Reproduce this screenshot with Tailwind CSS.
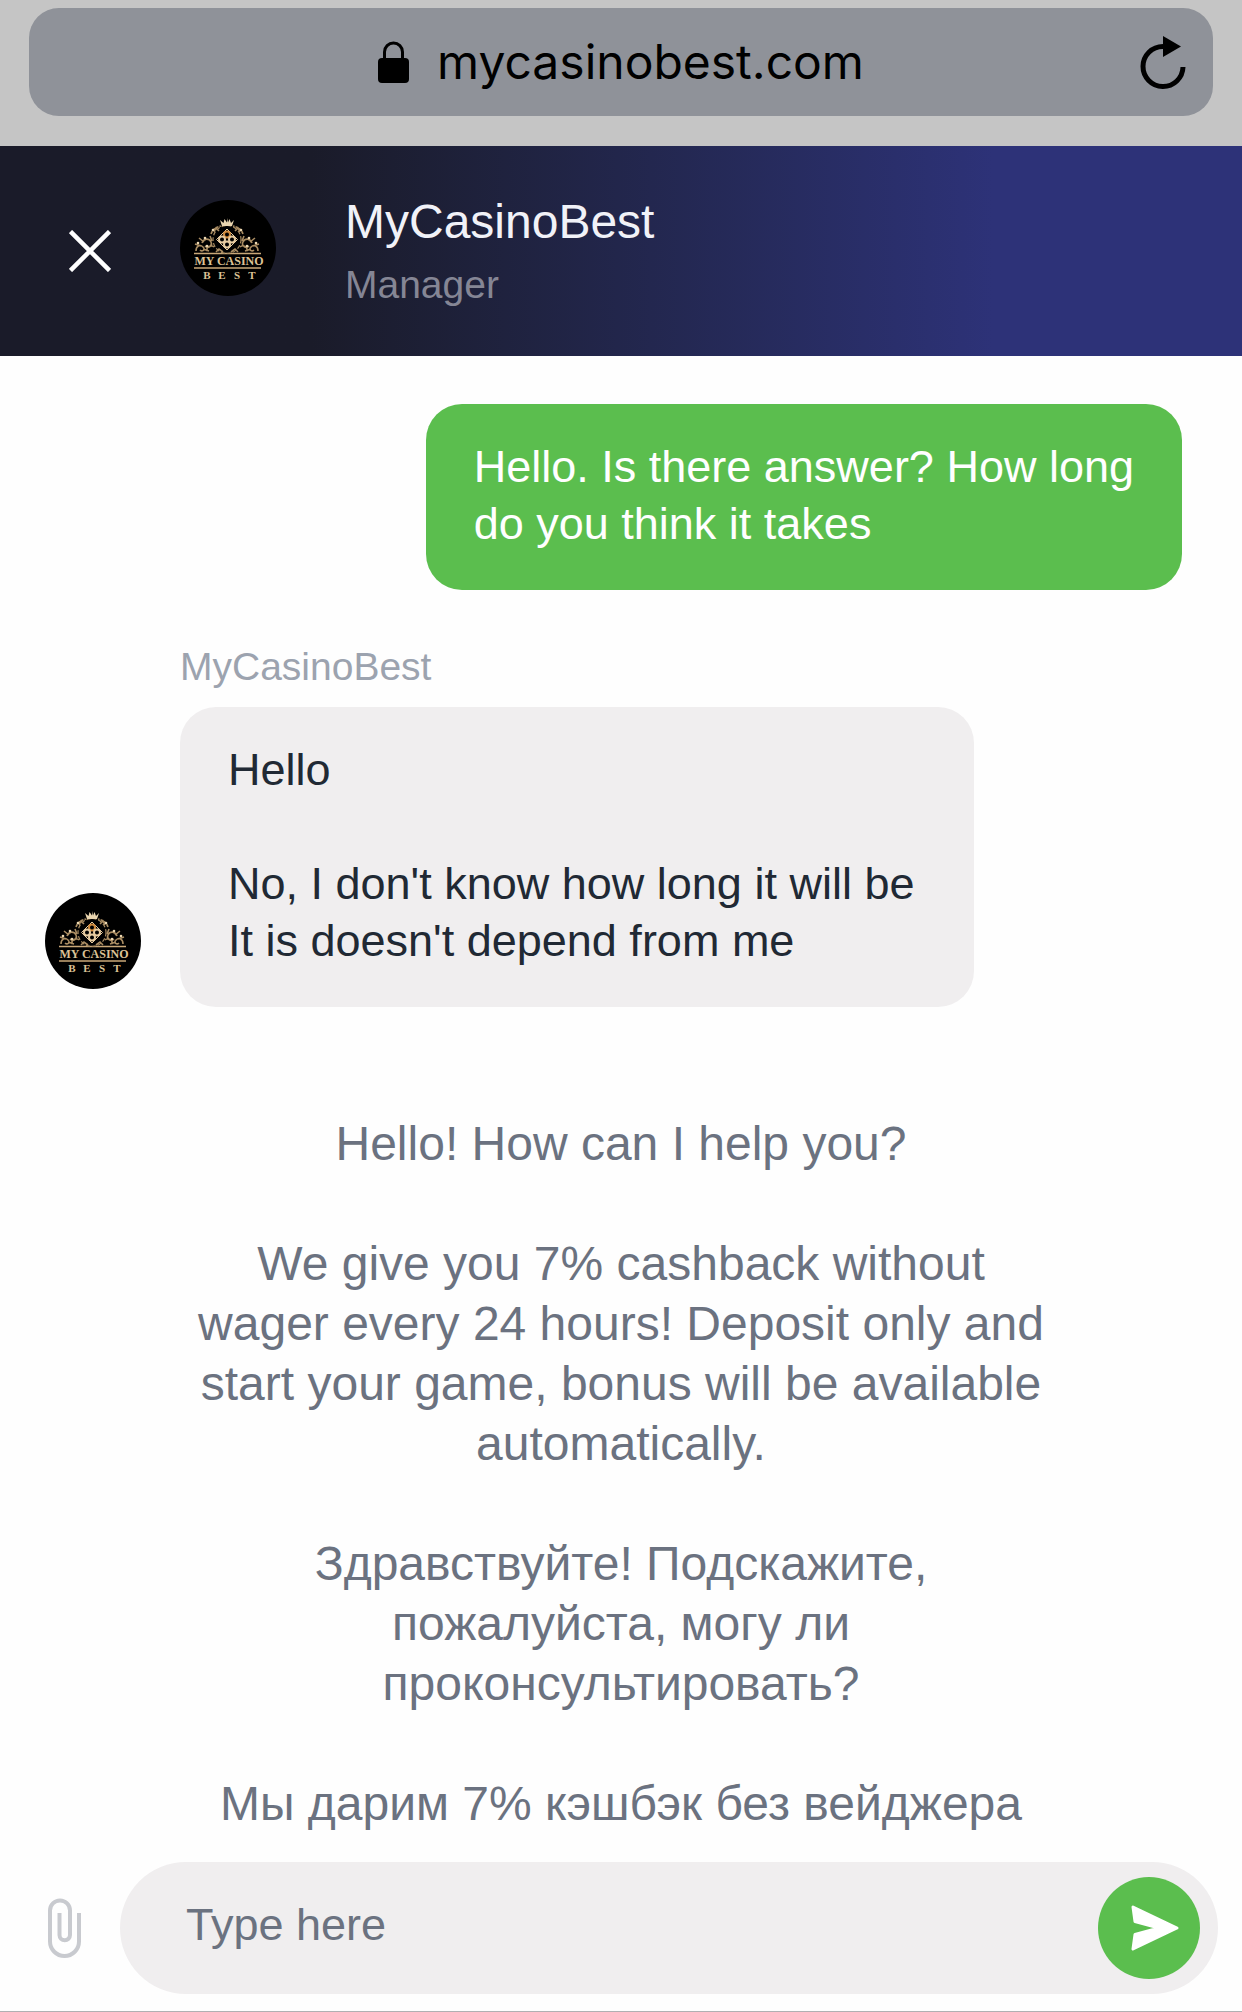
<!DOCTYPE html>
<html lang="en">
<head>
  <meta charset="UTF-8">
  <meta name="viewport" content="width=device-width, initial-scale=1.0">
  <title>MyCasinoBest - Live Chat</title>
  <script src="https://cdn.jsdelivr.net/npm/@tailwindcss/browser@4"></script>
</head>
<body class="bg-[#fefefe] font-['Liberation_Sans',Arial,sans-serif]">
  <!-- Logo shared by the header and the message avatar -->
  <svg class="hidden" aria-hidden="true">
    <symbol id="logo" viewBox="0 0 96 96">
      <circle cx="48" cy="48" r="48" fill="#000"/>
      <path d="M14 53.500h67M14 68h67" stroke="#c9a878" stroke-width="1.5"/>
      <!-- centre diamond -->
      <g fill="none" stroke="#e6cba0" stroke-width="2">
        <path d="M47 29l10.500 10.500L47 50 36.500 39.500z" stroke-width="1"/>
        <circle cx="47" cy="34.500" r="3" stroke="#d08a3c"/>
        <circle cx="47" cy="44.500" r="3"/>
        <circle cx="42" cy="39.500" r="3"/>
        <circle cx="52" cy="39.500" r="3"/>
      </g>
      <!-- scrollwork -->
      <g fill="none" stroke="#a98c62" stroke-width="1.6">
        <circle cx="47" cy="39.500" r="14" stroke-dasharray="4 2" stroke-width="1.2"/>
        <path d="M31 34c2-5 5-7 10-8M63 34c-2-5-5-7-10-8" stroke-dasharray="3 1"/>
        <path d="M34 32l2-4 3 3M60 32l-2-4-3 3M36 52l3-3 4 3M58 52l-3-3-4 3"/>
        <path d="M16 51c0-5 4-7 7-4s-1 5-3 3M22 43c2-5 7-5 9-1s-3 7-6 4M27 51c-1-4 4-7 7-4M15 44l6 2M19 38l5 4M30 36l2 5M23 49l6 2"/>
        <path d="M78 51c0-5-4-7-7-4s1 5 3 3M72 43c-2-5-7-5-9-1s3 7 6 4M67 51c1-4-4-7-7-4M79 44l-6 2M75 38l-5 4M64 36l-2 5M71 49l-6 2"/>
      </g>
      <g fill="#ead6b0">
        <circle cx="18" cy="43" r="1.300"/><circle cx="25" cy="38" r="1.300"/><circle cx="27" cy="46" r="1.300"/><circle cx="33" cy="30" r="1.300"/>
        <circle cx="76" cy="43" r="1.300"/><circle cx="69" cy="38" r="1.300"/><circle cx="67" cy="46" r="1.300"/><circle cx="61" cy="30" r="1.300"/>
        <path d="M42 26l-2-6 3.500 3 1-4 2.500 3.500L47 18l1 4.500 1.500-3.500 1.500 4 3-3-2 6z"/>
      </g>
      <g font-family="Liberation Serif, serif" font-weight="700" fill="#dcc296" text-anchor="middle">
        <text x="49" y="65" font-size="12">MY CASINO</text>
        <g font-size="11">
          <text x="27" y="79">B</text><text x="42" y="79">E</text><text x="57" y="79">S</text><text x="72" y="79">T</text>
        </g>
      </g>
    </symbol>
  </svg>

  <div class="flex h-screen flex-col overflow-hidden border-b border-[#b0b0b2]">
    <!-- Browser address bar -->
    <div class="shrink-0 bg-[#c5c5c5] px-[29px] pt-2 pb-[30px]">
      <div class="relative flex h-[108px] items-center justify-center rounded-[30px] bg-[#8f9299] text-black">
        <svg class="mr-7 h-[42px] w-[31px]" viewBox="0 0 31 42" aria-hidden="true">
          <rect x="0" y="17" width="31" height="25" rx="4"/>
          <path d="M6.500 18V11a9 9 0 0 1 18 0v7" fill="none" stroke="#000" stroke-width="3"/>
        </svg>
        <span class="font-[Inter,sans-serif] text-[48px] leading-[60px]">mycasinobest.com</span>
        <button type="button" aria-label="Reload" class="absolute top-7 right-[27px]">
          <svg class="h-[54px] w-[46px]" viewBox="0 0 46 54" aria-hidden="true">
            <path d="M23 10.500A20 20 0 1 0 43 31" fill="none" stroke="#000" stroke-width="5"/>
            <path d="M23 0l18 10.500L23 21z"/>
          </svg>
        </button>
      </div>
    </div>

    <!-- Chat header -->
    <header class="flex h-[210px] shrink-0 items-center bg-linear-to-r from-[#1a1b29] from-25% to-[#2d3278] to-80% pb-1.5">
      <button type="button" aria-label="Close chat" class="mr-[69px] ml-[69px] pt-1.5">
        <svg class="h-[42px] w-[42px]" viewBox="0 0 42 42" fill="none" stroke="#fff" stroke-width="4.500" aria-hidden="true">
          <path d="M1.500 1.500l39 39M40.500 1.500l-39 39"/>
        </svg>
      </button>
      <svg class="size-24" role="img" aria-label="My Casino Best"><use href="#logo"/></svg>
      <div class="ml-[69px] pt-2">
        <h1 class="text-[48px] leading-[60px] text-[#f1f2f8]">MyCasinoBest</h1>
        <p class="mt-1.5 text-[39px] leading-[54px] text-[#858695]">Manager</p>
      </div>
    </header>

    <!-- Messages -->
    <main class="min-h-0 flex-1 overflow-hidden pt-12">
      <div class="flex justify-end pr-[60px]">
        <p class="rounded-[36px] bg-[#5bbe4e] px-12 pt-[34px] pb-[38px] text-[45px] leading-[57px] text-white">Hello. Is there answer? How long<br>do you think it takes</p>
      </div>

      <div class="mt-[54px] flex items-end pl-[45px]">
        <svg class="mr-[39px] mb-[18px] size-24 shrink-0" role="img" aria-label="My Casino Best"><use href="#logo"/></svg>
        <div>
          <p class="text-[39px] leading-[45px] text-[#9ca3af]">MyCasinoBest</p>
          <p class="mt-[18px] rounded-[36px] bg-[#f0eeef] pt-[34px] pr-[60px] pb-[38px] pl-12 text-[45px] leading-[57px] text-[#212934]">Hello<br><br>No, I don't know how long it will be<br>It is doesn't depend from me</p>
        </div>
      </div>

      <div class="mt-[107px] space-y-[60px] px-[192px] text-center text-[48px] leading-[60px] text-[#6b7280]">
        <p>Hello! How can I help you?</p>
        <p>We give you 7% cashback without wager every 24 hours! Deposit only and start your game, bonus will be available automatically.</p>
        <p lang="ru">Здравствуйте! Подскажите, пожалуйста, могу ли проконсультировать?</p>
        <p lang="ru">Мы дарим 7% кэшбэк без вейджера</p>
      </div>
    </main>

    <!-- Message box -->
    <form class="flex shrink-0 items-center pt-3 pr-6 pb-[17px]">
      <button type="button" aria-label="Attach a file" class="mr-[39px] ml-12">
        <svg class="h-[60px] w-[33px]" viewBox="0 0 33 60" fill="none" stroke="#c8cacf" stroke-width="4" aria-hidden="true">
          <path d="M31 15v28.500a14.500 14.500 0 0 1-29 0V12.500a10 10 0 0 1 20 0V37a5.250 5.250 0 0 1-10.500 0V15"/>
        </svg>
      </button>
      <div class="flex h-[132px] flex-1 items-center rounded-full bg-[#f0eeef] pr-[18px] pl-[66px]">
        <input type="text" aria-label="Message" placeholder="Type here" class="min-w-0 flex-1 pb-1.5 text-[45px] leading-[60px] text-[#212934] outline-none placeholder:text-[#6b7280]">
        <button type="submit" aria-label="Send" class="flex size-[102px] items-center justify-center rounded-full bg-[#5bbe4e]">
          <svg class="ml-3 h-[46px] w-12" viewBox="0 0 48 46" fill="#fff" stroke="#fff" stroke-width="3" stroke-linejoin="round" aria-hidden="true">
            <path d="M2 2L46 23 2 44l2-14.500L28 23 4 16.500z"/>
          </svg>
        </button>
      </div>
    </form>
  </div>
</body>
</html>
